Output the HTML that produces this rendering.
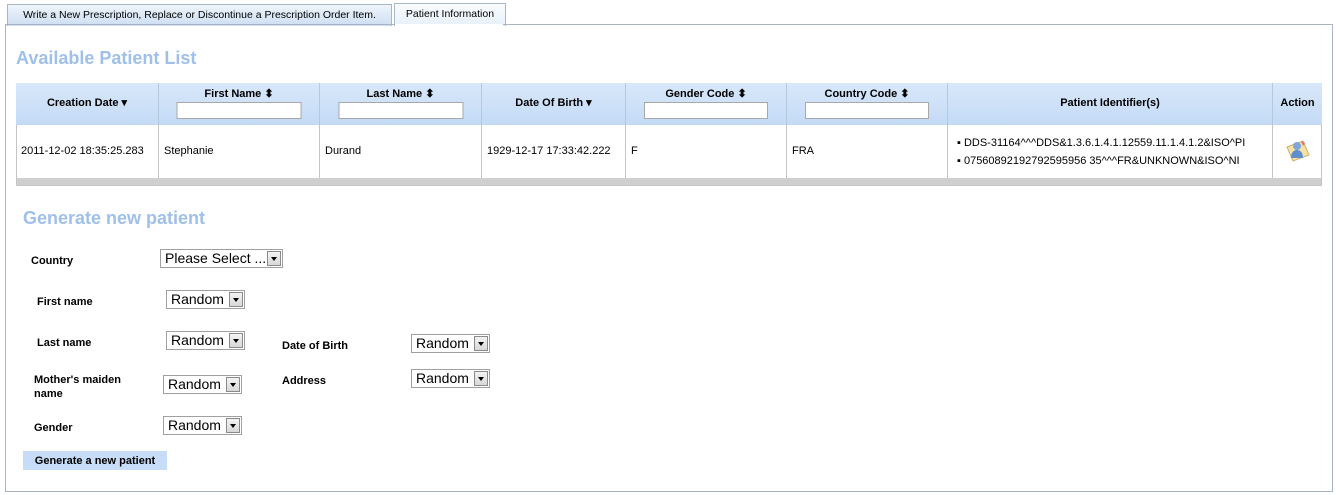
<!DOCTYPE html>
<html><head><style>
body{margin:0;width:1336px;height:495px;background:#fff;font-family:"Liberation Sans",Arial,sans-serif;font-size:11px;color:#000;position:relative;overflow:hidden}
.a{position:absolute}
.tab{position:absolute;border:1px solid #a9b8c8;border-bottom:none;background:linear-gradient(#eef4fb,#cddff3);font-size:10.5px;text-align:center;line-height:20px;white-space:nowrap}
.h{color:#9fc0ea;font-weight:bold;font-size:18px}
.th{position:absolute;top:83px;height:42px;background:linear-gradient(#d9e8fa,#c3daf6);border-right:1px solid #b8c8dc;font-weight:bold;text-align:center;box-sizing:border-box}
.td{position:absolute;top:125px;height:53px;border-right:1px solid #c5c5c5;box-sizing:border-box;line-height:53px;padding-left:5px}
.in{position:absolute;left:50%;transform:translateX(-50%);top:19px;height:17px;border:1px solid #a8a8a8;background:#fff;box-sizing:border-box}
.sel{position:absolute;border:1px solid #a0a0a0;background:#fff;height:19px;box-sizing:border-box;font-size:14px;line-height:16px;padding-left:4px}
.sel i{position:absolute;right:1px;top:1px;width:14px;height:15px;background:linear-gradient(#f3f3f3,#d8d8d8);border:1px solid #8a8a8a;box-sizing:border-box}
.sel i:after{content:"";position:absolute;left:3px;top:5px;border:3px solid transparent;border-top:4px solid #000}
.lb{position:absolute;font-weight:bold;font-size:11px}
</style></head><body>
<div class="tab" style="left:7px;top:4px;width:383px;height:21px">Write a New Prescription, Replace or Discontinue a Prescription Order Item.</div>
<div class="tab" style="left:394px;top:3px;width:110px;height:22px;background:linear-gradient(#fafcfe,#e7f0fa)">Patient Information</div>
<div class="a" style="left:5px;top:24px;width:1326px;height:466px;border:1px solid #a9b4c2"></div>
<div class="a" style="left:395px;top:24px;width:108px;height:2px;background:#fff"></div>
<div class="a h" style="left:16px;top:48px">Available Patient List</div>
<div class="a" style="left:16px;top:83px;width:1306px;height:103px;border:1px solid #c5c5c5;box-sizing:border-box"></div>
<div class="th" style="left:16px;width:143px;line-height:40px">Creation Date ▾</div>
<div class="th" style="left:159px;width:161px;padding-top:4px">First Name ⬍<div class="in" style="width:125px"></div></div>
<div class="th" style="left:320px;width:162px;padding-top:4px">Last Name ⬍<div class="in" style="width:125px"></div></div>
<div class="th" style="left:482px;width:144px;line-height:40px">Date Of Birth ▾</div>
<div class="th" style="left:626px;width:161px;padding-top:4px">Gender Code ⬍<div class="in" style="width:124px"></div></div>
<div class="th" style="left:787px;width:161px;padding-top:4px">Country Code ⬍<div class="in" style="width:124px"></div></div>
<div class="th" style="left:948px;width:325px;line-height:40px">Patient Identifier(s)</div>
<div class="th" style="left:1273px;width:49px;line-height:40px;border-right:none">Action</div>
<div class="td" style="left:16px;width:143px">2011-12-02 18:35:25.283</div>
<div class="td" style="left:159px;width:161px">Stephanie</div>
<div class="td" style="left:320px;width:162px">Durand</div>
<div class="td" style="left:482px;width:144px">1929-12-17 17:33:42.222</div>
<div class="td" style="left:626px;width:161px">F</div>
<div class="td" style="left:787px;width:161px">FRA</div>
<div class="td" style="left:948px;width:325px;line-height:18px;padding-top:9px;padding-left:9px">▪ DDS-31164^^^DDS&amp;1.3.6.1.4.1.12559.11.1.4.1.2&amp;ISO^PI<br>▪ 07560892192792595956 35^^^FR&amp;UNKNOWN&amp;ISO^NI</div>
<div class="td" style="left:1273px;width:49px;border-right:none">
<svg class="a" style="left:10px;top:12px" width="28" height="28" viewBox="0 0 28 28"><path d="M4 10l16-6 6 14-16 6z" fill="#f4e3a4" stroke="#c9b170"/><circle cx="14" cy="9" r="4" fill="#7ea6dc"/><path d="M8 21c0-6 3-8 6-8s6 2 6 8z" fill="#5d8fd0"/><path d="M18 4l4 2-2 3z" fill="#e66"/></svg></div>
<div class="a" style="left:17px;top:178px;width:1304px;height:7px;background:#cfcfcf"></div>
<div class="a h" style="left:23px;top:208px">Generate new patient</div>
<div class="lb" style="left:31px;top:255px">Country</div>
<div class="sel" style="left:160px;top:249px;width:123px">Please Select ...<i></i></div>
<div class="lb" style="left:37px;top:296px">First name</div>
<div class="sel" style="left:166px;top:290px;width:79px">Random<i></i></div>
<div class="lb" style="left:37px;top:337px">Last name</div>
<div class="sel" style="left:166px;top:331px;width:79px">Random<i></i></div>
<div class="lb" style="left:34px;top:373px;line-height:14px">Mother's maiden<br>name</div>
<div class="sel" style="left:163px;top:375px;width:79px">Random<i></i></div>
<div class="lb" style="left:34px;top:422px">Gender</div>
<div class="sel" style="left:163px;top:416px;width:79px">Random<i></i></div>
<div class="lb" style="left:282px;top:340px">Date of Birth</div>
<div class="sel" style="left:411px;top:334px;width:79px">Random<i></i></div>
<div class="lb" style="left:282px;top:375px">Address</div>
<div class="sel" style="left:411px;top:369px;width:79px">Random<i></i></div>
<div class="a" style="left:23px;top:451px;width:144px;height:19px;background:#c6dcf7;font-weight:bold;line-height:20px;text-align:center">Generate a new patient</div>
</body></html>
